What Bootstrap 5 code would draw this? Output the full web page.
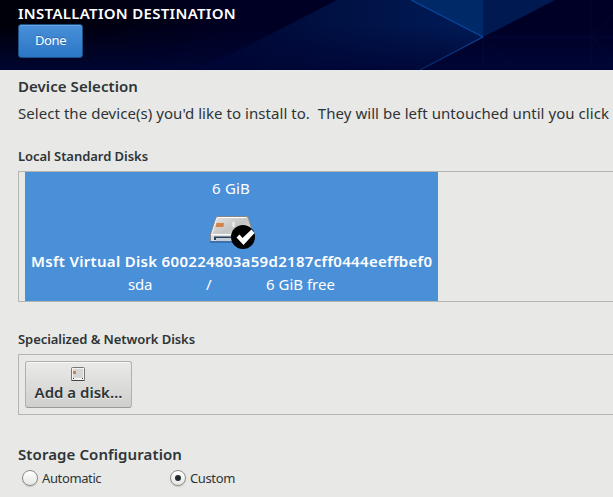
<!DOCTYPE html>
<html lang="en">
<head>
<meta charset="utf-8">
<meta name="viewport" content="width=device-width, initial-scale=1">
<title>Installation Destination</title>
<link href="https://cdn.jsdelivr.net/npm/bootstrap@5.3.0/dist/css/bootstrap.min.css" rel="stylesheet">
<style>
  body { font-family: "Noto Sans", "Open Sans", sans-serif; font-size: 15px; line-height: 20px; color: #2e3436; background: #e8e8e6; height: 497px; }
  .t-sm { font-size: 13px; }
  .spoke-head { height: 70px; padding: 3px 0 0 18px; background: #00001f; }
  .head-title { letter-spacing: .301px; margin-bottom: 1px; }
  .btn-done { width: 65px; height: 34px; padding: 0 0 2px; font-size: 13px; line-height: 20px; letter-spacing: -.4px; color: #fff; border: 1px solid #1c5187; border-radius: 3px; background: linear-gradient(#4a90d9, #2a76c6); box-shadow: inset 0 1px #6ba5e1; text-shadow: 0 -1px rgba(0,0,0,.25); }
  .page-body { padding: 6px 0 0 18px; }
  .section-title { letter-spacing: .071px; }
  .intro { margin-top: 7px; letter-spacing: .05px; }
  .local-title { margin-top: 23px; letter-spacing: -.047px; }
  .net-title { margin-top: 27px; letter-spacing: -.068px; }
  .store-title { margin-top: 29px; letter-spacing: .097px; }
  .frame { border: 1px solid #b4b4b0; border-right: 0; margin-top: 5px; padding-left: 6px; }
  .frame-local { height: 131px; }
  .frame-net { height: 61px; padding-top: 6px; }
  .disk { width: 413px; height: 129px; background: #4a90d9; color: #fff; padding-top: 6px; }
  .disk-size { padding-right: 1px; letter-spacing: .15px; }
  .disk-icon { display: block; margin: 14px 0 0 184px; }
  .disk-name { letter-spacing: .31px; margin: 1px 0 0 6px; }
  .disk-info { margin-top: 3px; padding-left: 103px; }
  .disk-dev { width: 78px; letter-spacing: -.2px; }
  .disk-mount { width: 60px; }
  .btn-add { width: 107px; height: 47px; padding: 4px 0 0; font-size: 15px; line-height: 20px; color: #2e3436; border: 1px solid #b0b0ac; border-bottom-color: #989894; border-radius: 3px; background: linear-gradient(#eaeae8, #cfcfcd); box-shadow: inset 0 1px #f7f7f6; text-shadow: 0 1px rgba(255,255,255,.7); }
  .btn-add svg { margin-right: 1px; }
  .radio { width: 16px; height: 16px; border: 1px solid #8b8b87; border-radius: 50%; background: linear-gradient(#fff, #e6e6e4); box-shadow: 0 1px 1px rgba(0,0,0,.15); margin-right: 4px; }
  .radio.on::after { content: ""; display: block; width: 6px; height: 6px; margin: 4px; border-radius: 50%; background: #222a2e; }
  .choices { margin-top: 4px; padding-left: 4px; font-size: 13px; letter-spacing: -.38px; }
  .choice { width: 148px; }
</style>
</head>
<body class="overflow-hidden">
<header class="spoke-head position-relative overflow-hidden">
  <svg class="position-absolute top-0 start-0" width="613" height="70" viewBox="0 0 613 70" aria-hidden="true">
    <defs>
      <linearGradient id="base" x1="0" y1="0" x2="1" y2="0"><stop offset="0" stop-color="#000008"/><stop offset=".2" stop-color="#000012"/><stop offset=".4" stop-color="#000024"/><stop offset="1" stop-color="#000026"/></linearGradient>
      <linearGradient id="glow" x1="0" y1="0" x2="0" y2="1"><stop offset=".35" stop-color="#000636" stop-opacity="0"/><stop offset="1" stop-color="#000636" stop-opacity=".9"/></linearGradient>
      <linearGradient id="ray" x1="195" y1="0" x2="483" y2="0" gradientUnits="userSpaceOnUse"><stop offset="0" stop-color="#00052f"/><stop offset=".4" stop-color="#000f40"/><stop offset="1" stop-color="#001c58"/></linearGradient>
      <linearGradient id="edge" x1="1" y1="0" x2="0" y2="1"><stop offset="0" stop-color="#0c459c"/><stop offset="1" stop-color="#052664"/></linearGradient>
    </defs>
    <rect width="613" height="70" fill="url(#base)"/>
    <path d="M337 0H483V37L420 70H195L240 50z" fill="url(#ray)"/>
    <path d="M555 0H613V70H420L483 37z" fill="#000026"/>
    <rect width="613" height="70" fill="url(#glow)"/>
    <path d="M411 0H483V37z" fill="#002967"/>
    <path d="M483 0H555L483 37z" fill="#001950"/>
    <path d="M483 37H613M483 37V70M591 0V70M613 15L591 37L613 59M483 37L515 70" fill="none" stroke="#001348" opacity=".45"/>
    <path d="M411 0L483 37" fill="none" stroke="#0b459d" stroke-width="1.300"/>
    <path d="M483 37L420 70" fill="none" stroke="url(#edge)" stroke-width="1.200"/>
  </svg>
  <div class="position-relative">
    <div class="head-title fw-semibold text-white">INSTALLATION DESTINATION</div>
    <button type="button" class="btn btn-done d-block">Done</button>
  </div>
</header>
<main class="page-body">
  <div class="section-title fw-semibold">Device Selection</div>
  <div class="intro text-nowrap">Select the device(s) you'd like to install to.&nbsp; They will be left untouched until you click</div>

  <div class="local-title t-sm fw-semibold">Local Standard Disks</div>
  <div class="frame frame-local">
    <div class="disk">
      <div class="disk-size text-center">6 GiB</div>
      <svg class="disk-icon" width="48" height="38" viewBox="0 0 48 38" aria-hidden="true">
        <defs>
          <linearGradient id="metal" x1="0" y1="0" x2="1" y2="1"><stop offset="0" stop-color="#e6e6e6"/><stop offset=".5" stop-color="#c4c4c4"/><stop offset="1" stop-color="#e8e8e8"/></linearGradient>
        </defs>
        <path d="M1 30H30" stroke="#2f5f92" stroke-width="2" opacity=".6"/>
        <path d="M8.500 4.500H37.500Q39 4.500 39.500 6L43.500 20V28.500H1.500V22L7 5.800Q7.500 4.500 8.500 4.500z" fill="url(#metal)" stroke="#858585"/>
        <path d="M8.500 5.500H37.500" stroke="#fff"/>
        <path d="M7.800 6L3 21.500" stroke="#fff" opacity=".8"/>
        <path d="M2 22H43V29H2z" fill="#dcdcdc"/>
        <path d="M5 24.500H43V28H5z" fill="#29415c"/>
        <path d="M7 26H43V29H7z" fill="#c4ccd4"/>
        <path d="M2 22.500H30" stroke="#fff"/>
        <path d="M7.500 11H15L14.500 15H6.500z" fill="#d4834b"/>
        <path d="M24.500 10V15" stroke="#f2f2f2" stroke-width="2"/>
        <circle cx="34" cy="25" r="12" fill="#000"/>
        <path d="M27.500 25.500L30.500 22.500L33.500 26L42.500 17.500L45.500 21L34.500 33z" fill="#fff"/>
      </svg>
      <div class="disk-name fw-semibold text-nowrap">Msft Virtual Disk 600224803a59d2187cff0444eeffbef0</div>
      <div class="disk-info d-flex">
        <span class="disk-dev">sda</span><span class="disk-mount">/</span><span>6 GiB free</span>
      </div>
    </div>
  </div>

  <div class="net-title t-sm fw-semibold">Specialized &amp; Network Disks</div>
  <div class="frame frame-net">
    <button type="button" class="btn btn-add fw-semibold d-flex flex-column align-items-center">
      <svg class="flex-shrink-0" width="16" height="16" viewBox="0 0 16 16" aria-hidden="true">
        <rect x="1.500" y="1.500" width="13" height="13" rx="1" fill="#f4f4f3" stroke="#777"/>
        <path d="M1.500 14.500H14.500" stroke="#444"/>
        <rect x="3" y="3" width="10" height="9" fill="#d6d6d6"/>
        <rect x="3" y="5" width="3" height="3" fill="#c98250"/>
        <path d="M3 12.500H4M12 12.500H13" stroke="#444"/>
      </svg>
      <span>Add a disk…</span>
    </button>
  </div>

  <div class="store-title fw-semibold">Storage Configuration</div>
  <div class="choices d-flex">
    <label class="choice d-flex align-items-center"><span class="radio"></span>Automatic</label>
    <label class="choice d-flex align-items-center"><span class="radio on"></span>Custom</label>
  </div>
</main>
<script src="https://cdn.jsdelivr.net/npm/bootstrap@5.3.0/dist/js/bootstrap.bundle.min.js"></script>
</body>
</html>
